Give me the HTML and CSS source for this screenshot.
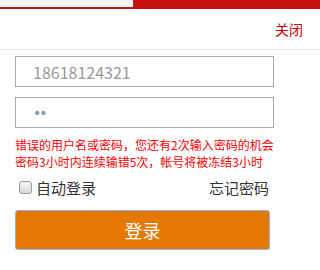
FILE: index.html
```html
<!DOCTYPE html>
<html lang="zh-CN">
<head>
<meta charset="utf-8">
<title>登录</title>
<link rel="stylesheet" href="styles.css">
</head>
<body>
<div class="topbar"><div class="tab"></div></div>
<div class="head"><a class="close" href="#">关闭</a></div>
<form class="form">
  <input class="field" type="text" value="18618124321">
  <input class="field pw" type="password" value="12">
  <p class="error">错误的用户名或密码，您还有2次输入密码的机会<br>密码3小时内连续输错5次，帐号将被冻结3小时</p>
  <div class="row">
    <label class="auto"><input class="chk" type="checkbox">自动登录</label>
    <a class="forgot" href="#">忘记密码</a>
  </div>
  <button class="submit" type="button">登录</button>
</form>
</body>
</html>
```
FILE: styles.css
```css
html, body {
  margin: 0;
  padding: 0;
  background: #fff;
  font-family: "Microsoft YaHei", "Noto Sans CJK SC", sans-serif;
}
.topbar {
  height: 9px;
  background: #c4120f;
  display: flex;
}
.tab {
  width: 133px;
  height: 7px;
  background: #f5f5f5;
}
.head {
  height: 40px;
  border-bottom: 1px solid #e6e6e6;
  display: flex;
  justify-content: flex-end;
  align-items: center;
  padding-right: 17px;
}
.close {
  font-size: 14px;
  color: #c00;
  text-decoration: none;
}
.form {
  margin: 0;
  padding: 6px 0 0 15px;
  display: flex;
  flex-direction: column;
  align-items: flex-start;
}
.field {
  box-sizing: border-box;
  width: 259px;
  height: 31px;
  margin: 0;
  border: 1px solid #aaa;
  padding: 0 0 0 17px;
  font-family: inherit;
  font-size: 16px;
  color: #999;
  outline: none;
}
.pw {
  margin-top: 10px;
  font-family: "DejaVu Sans", sans-serif;
  font-size: 14px;
  letter-spacing: -2px;
  color: #8a9ab0;
}
.error {
  margin: 8px 0 0;
  font-size: 12px;
  line-height: 17px;
  color: #f00;
  white-space: nowrap;
}
.row {
  box-sizing: border-box;
  width: 259px;
  height: 22px;
  margin-top: 6px;
  padding-right: 5px;
  display: flex;
  justify-content: space-between;
  align-items: center;
  font-size: 15px;
  color: #333;
}
.auto {
  display: flex;
  align-items: center;
}
.chk {
  appearance: none;
  -webkit-appearance: none;
  box-sizing: border-box;
  margin: 0 4px 0 4px;
  width: 13px;
  height: 13px;
  border: 1px solid #9a9a9a;
  border-radius: 3px;
  background: linear-gradient(#f4f4f4, #d8d8d8);
}
.forgot {
  color: #333;
  text-decoration: none;
}
.submit {
  box-sizing: border-box;
  width: 255px;
  height: 40px;
  margin-top: 12px;
  border: 1px solid #8db4ee;
  border-radius: 3px;
  background: #e57800;
  color: #fff;
  font-family: inherit;
  font-size: 18px;
  padding: 0;
}
```
